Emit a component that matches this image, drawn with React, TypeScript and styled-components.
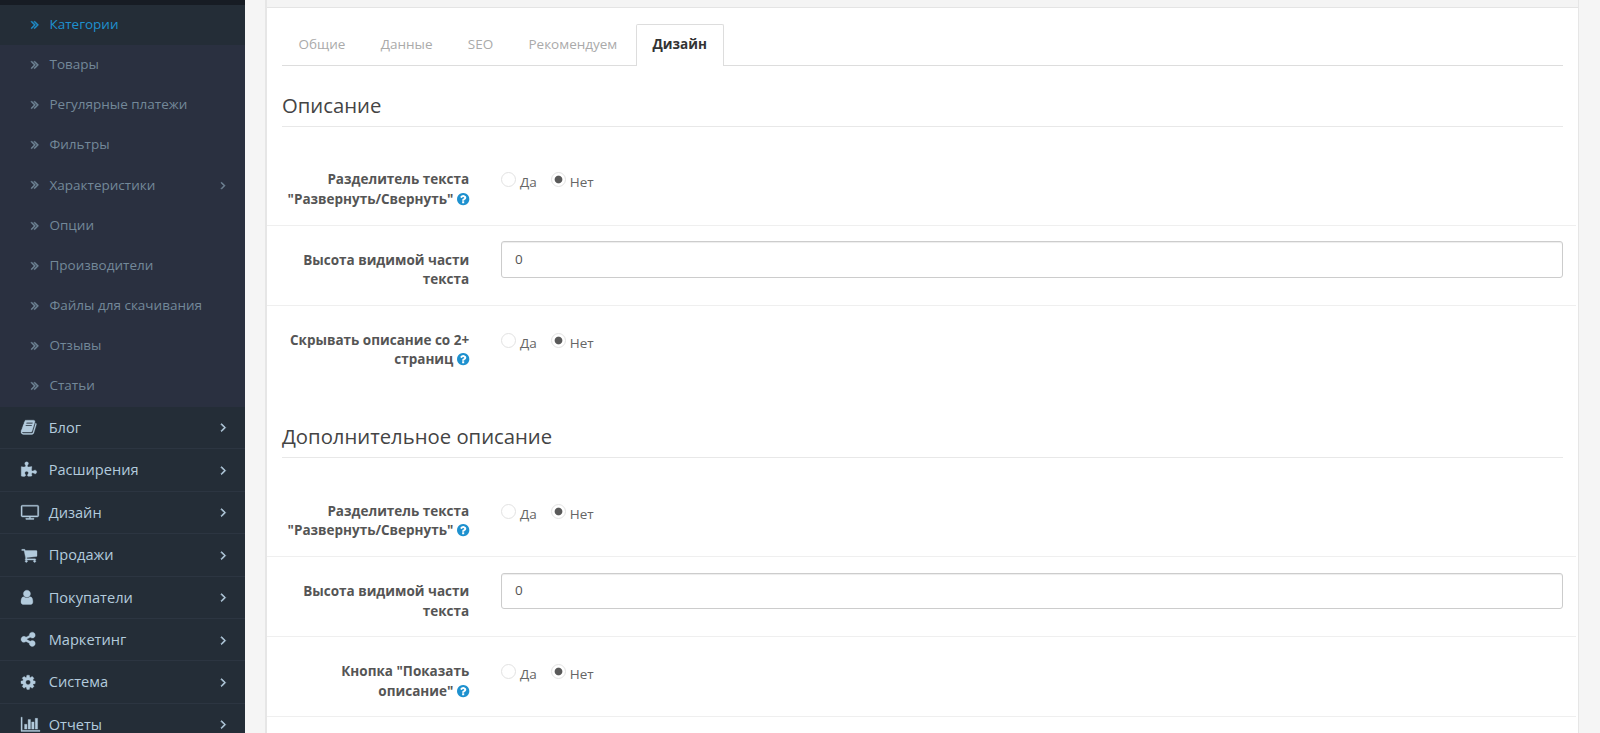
import React, { useState } from "react";
import styled, { createGlobalStyle } from "styled-components";

const GlobalStyle = createGlobalStyle`
  * {
    box-sizing: border-box;
  }

  body {
    margin: 0;
    height: 733px;
    overflow: hidden;
    background: #f5f5f5;
    color: #666;
    font-family: "Open Sans", "Noto Sans", sans-serif;
    font-size: 13.5px;
    line-height: 19.4px;
  }
`;

const Page = styled.div`
  display: flex;
  height: 733px;
  overflow: hidden;
`;

/* ---------- Sidebar ---------- */

const Sidebar = styled.nav`
  flex: 0 0 245px;
  padding-top: 5px;
  background: linear-gradient(#171c24 5px, #242d37 5px);
  overflow: hidden;
`;

const SubMenu = styled.ul`
  margin: 0;
  padding: 0;
  list-style: none;
  background: #2a3040;
`;

const SubItem = styled.li<{ $active?: boolean }>`
  display: flex;
  align-items: center;
  height: 40.2px;
  padding: 0 19.5px 1.2px 31px;
  background: ${(p) => (p.$active ? "#242d37" : "transparent")};
  color: ${(p) => (p.$active ? "#1e91cf" : "#738899")};
  font-size: 13.5px;
  cursor: pointer;

  span {
    flex: 1;
    margin-left: 11px;
    white-space: nowrap;
  }
`;

const TopMenu = styled.ul`
  margin: 0;
  padding: 0;
  list-style: none;
`;

const TopItem = styled.li`
  display: flex;
  align-items: center;
  height: 42.43px;
  padding: 0 19px 0 21px;
  border-bottom: 1px solid #2c3541;
  color: #b3cbdd;
  font-size: 14.6px;
  cursor: pointer;

  span {
    flex: 1;
    white-space: nowrap;
  }
`;

const IconCell = styled.i`
  display: flex;
  flex: 0 0 27.7px;
  align-items: center;
`;

const Glyph = styled.svg<{ $weight?: number }>`
  display: block;
  flex: none;
  overflow: visible;
  fill: currentColor;
  stroke: currentColor;
  stroke-width: ${(p) => p.$weight || 0};
`;

/* ---------- Content ---------- */

const Content = styled.main`
  flex: 1;
  padding: 0 21px 0 20px;
  min-width: 0;
`;

const Panel = styled.section`
  height: 800px;
  border: solid #e6e6e6;
  border-width: 0 1px 0 2px;
  background: #fff;
`;

const PanelHeading = styled.header`
  height: 8px;
  background: #f4f4f4;
  border-bottom: 1px solid #e4e4e4;
`;

const PanelBody = styled.div`
  padding: 16px 15px 0;
`;

const Tabs = styled.ul`
  display: flex;
  height: 42px;
  margin: 0 0 20.6px;
  padding: 0;
  list-style: none;
  border-bottom: 1px solid #ddd;
`;

const Tab = styled.li<{ $active?: boolean }>`
  height: 42px;
  margin-right: 2.1px;
  padding: 9.5px 15.6px 0;
  border: 1px solid ${(p) => (p.$active ? "#ddd" : "transparent")};
  border-bottom: 0;
  border-radius: 2px 2px 0 0;
  background: ${(p) => (p.$active ? "#fff" : "transparent")};
  color: ${(p) => (p.$active ? "#333" : "#aaa")};
  font-weight: ${(p) => (p.$active ? 700 : 400)};
  line-height: 19.4px;
  cursor: pointer;
`;

const Fieldset = styled.section`
  margin-bottom: 32.6px;
`;

const Legend = styled.h2`
  height: 40px;
  margin: 0 0 18.5px;
  padding-top: 4px;
  border-bottom: 1px solid #e8e8e8;
  color: #444;
  font-size: 20.3px;
  font-weight: 400;
  line-height: 28px;
`;

const FormGroup = styled.div`
  display: flex;
  height: 80.05px;
  margin: 0 -13px 0 -15px;
  padding: 15.6px 13px 0 15px;

  & + & {
    border-top: 1px solid #efefef;
    padding-top: 15.2px;
  }
`;

const Label = styled.label`
  flex: 0 0 187.2px;
  padding-top: 9.7px;
  color: #555;
  font-weight: 700;
  text-align: right;

  svg {
    display: inline-block;
    margin: 0 -0.5px 0 4px;
    color: #1e91cf;
    vertical-align: -2.3px;
  }
`;

const Field = styled.div`
  flex: 1;
  margin-left: 31.8px;
`;

const RadioGroup = styled.div`
  display: flex;
  gap: 14px;
  padding-top: 11px;
`;

const RadioLabel = styled.label`
  display: flex;
  gap: 4px;
  cursor: pointer;
`;

const Radio = styled.input`
  appearance: none;
  width: 15px;
  height: 15px;
  margin: 0.8px 0 0;
  border: 1px solid #e2e2e2;
  border-radius: 50%;
  background: #fff;

  &:checked {
    background: radial-gradient(circle, #5a5a5a 3.4px, #fff 4.3px);
  }
`;

const RadioText = styled.span`
  padding-top: 1.8px;
`;

const Input = styled.input`
  display: block;
  width: 100%;
  height: 36.5px;
  padding: 0 13px 1px;
  border: 1px solid #ccc;
  border-radius: 3px;
  box-shadow: inset 0 1px 1px rgba(0, 0, 0, 0.075);
  background: #fff;
  color: #555;
  font: inherit;
  outline: none;
`;

/* Icon outlines, drawn on a grid 1792 units tall: [width, path] */
const icons = {
  angleRight: [
    1280,
    "M1171 960q0 13-10 23l-466 466q-10 10-23 10t-23-10l-50-50q-10-10-10-23t10-23l393-393-393-393q-10-10-10-23t10-23l50-50q10-10 23-10t23 10l466 466q10 10 10 23z",
  ],
  book: [
    1792,
    "M1703 478q40 57 18 129l-275 906q-19 64-76.5 107.5t-122.5 43.5h-923q-77 0-148.5-53.5t-99.5-131.5q-24-67-2-127 0-4 3-27t4-37q1-8-3-21.5t-3-19.5q2-11 8-21t16.5-23.5 16.5-23.5q23-38 45-91.5t30-91.5q3-10 .5-30t-.5-28q3-11 17-28t17-23q21-36 42-92t25-90q1-9-2.5-32t.5-28q4-13 22-30.5t22-22.5q19-26 42.5-84.5t27.5-96.5q1-8-3-25.5t-2-26.5q2-8 9-18t18-23 17-21q8-12 16.5-30.5t15-35 16-36 19.5-32 26.5-23.5 36-11.5 47.5 5.5l-1 3q38-9 51-9h761q74 0 114 56t18 130l-274 906q-36 119-71.5 153.5t-128.5 34.5h-869q-27 0-38 15-11 16-1 43 24 70 144 70h923q29 0 56-15.5t35-41.5l300-987q7-22 5-57 38 15 59 43zm-1064 2q-4 13 2 22.5t20 9.5h608q13 0 25.5-9.5t16.5-22.5l21-64q4-13-2-22.5t-20-9.5h-608q-13 0-25.5 9.5t-16.5 22.5zm-83 256q-4 13 2 22.5t20 9.5h608q13 0 25.5-9.5t16.5-22.5l21-64q4-13-2-22.5t-20-9.5h-608q-13 0-25.5 9.5t-16.5 22.5z",
  ],
  puzzle: [
    1792,
    "M1755 1083q0 81-44.5 135t-123.5 54q-41 0-77.5-17.5t-59-38-56.5-38-71-17.5q-110 0-110 124 0 39 16 115t15 115v5q-22 0-33 1-34 3-97.5 11.5t-115.5 13.5-98 5q-61 0-103-26.5t-42-83.5q0-37 17.5-71t38-56.5 38-59 17.5-77.5q0-79-54-123.5t-135-44.5q-84 0-143 45.5t-59 127.5q0 43 15 83t33.5 64.5 33.5 53 15 50.5q0 45-46 89-37 35-117 35-95 0-245-24-9-2-27.5-4t-27.5-4l-13-2q-1 0-3-1-2 0-2-1v-1024q2 1 17.5 3.5t34 5 21.5 3.5q150 24 245 24 80 0 117-35 46-44 46-89 0-22-15-50.5t-33.5-53-33.5-64.5-15-83q0-82 59-127.5t144-45.5q80 0 134 44.5t54 123.5q0 41-17.5 77.5t-38 59-38 56.5-17.5 71q0 57 42 83.5t103 26.5q64 0 180-15t163-17v2q-1 2-3.5 17.5t-5 34-3.5 21.5q-24 150-24 245 0 80 35 117 44 46 89 46 22 0 50.5-15t53-33.5 64.5-33.5 83-15q82 0 127.5 59t45.5 143z",
  ],
  television: [
    1920,
    "M1792 1248v-960q0-13-9.5-22.5t-22.5-9.5h-1600q-13 0-22.5 9.5t-9.5 22.5v960q0 13 9.5 22.5t22.5 9.5h1600q13 0 22.5-9.5t9.5-22.5zm128-960v960q0 66-47 113t-113 47h-736v128h352q14 0 23 9t9 23v64q0 14-9 23t-23 9h-832q-14 0-23-9t-9-23v-64q0-14 9-23t23-9h352v-128h-736q-66 0-113-47t-47-113v-960q0-66 47-113t113-47h1600q66 0 113 47t47 113z",
  ],
  cart: [
    1792,
    "M704 1536q0 52-38 90t-90 38-90-38-38-90 38-90 90-38 90 38 38 90zm896 0q0 52-38 90t-90 38-90-38-38-90 38-90 90-38 90 38 38 90zm128-1088v512q0 24-16.5 42.5t-40.5 21.5l-1044 122q13 60 13 70 0 16-24 64h920q26 0 45 19t19 45-19 45-45 19h-1024q-26 0-45-19t-19-45q0-11 8-31.5t16-36 21.5-40 15.5-29.5l-177-823h-204q-26 0-45-19t-19-45 19-45 45-19h256q16 0 28.5 6.5t19.5 15.5 13 24.5 8 26 5.5 29.5 4.5 26h1201q26 0 45 19t19 45z",
  ],
  user: [
    1792,
    "M1536 1399q0 109-62.5 187t-150.5 78h-854q-88 0-150.5-78t-62.5-187q0-85 8.5-160.5t31.5-152 58.5-131 94-89 134.5-34.5q131 128 313 128t313-128q76 0 134.5 34.5t94 89 58.5 131 31.5 152 8.5 160.5zm-256-887q0 159-112.5 271.5t-271.5 112.5-271.5-112.5-112.5-271.5 112.5-271.5 271.5-112.5 271.5 112.5 112.5 271.5z",
  ],
  share: [
    1792,
    "M1344 1024q133 0 226.5 93.5t93.5 226.5-93.5 226.5-226.5 93.5-226.5-93.5-93.5-226.5q0-12 2-34l-360-180q-92 86-218 86-133 0-226.5-93.5t-93.5-226.5 93.5-226.5 226.5-93.5q126 0 218 86l360-180q-2-22-2-34 0-133 93.5-226.5t226.5-93.5 226.5 93.5 93.5 226.5-93.5 226.5-226.5 93.5q-126 0-218-86l-360 180q2 22 2 34t-2 34l360 180q92-86 218-86z",
  ],
  cog: [
    1792,
    "M1152 896q0-106-75-181t-181-75-181 75-75 181 75 181 181 75 181-75 75-181zm512-109v222q0 12-8 23t-20 13l-185 28q-19 54-39 91 35 50 107 138 10 12 10 25t-9 23q-27 37-99 108t-94 71q-12 0-26-9l-138-108q-44 23-91 38-16 136-29 186-7 28-36 28h-222q-14 0-24.5-8.5t-11.5-21.5l-28-184q-49-16-90-37l-141 107q-10 9-25 9-14 0-25-11-126-114-165-168-7-10-7-23 0-12 8-23 15-21 51-66.5t54-70.5q-27-50-41-99l-183-27q-13-2-21-12.5t-8-23.5v-222q0-12 8-23t19-13l186-28q14-46 39-92-40-57-107-138-10-12-10-24 0-10 9-23 26-36 98.5-107.5t94.5-71.5q13 0 26 10l138 107q44-23 91-38 16-136 29-186 7-28 36-28h222q14 0 24.5 8.5t11.5 21.5l28 184q49 16 90 37l142-107q9-9 24-9 13 0 25 10 129 119 165 170 7 8 7 22 0 12-8 23-15 21-51 66.5t-54 70.5q26 50 41 98l183 28q13 2 21 12.5t8 23.5z",
  ],
  chart: [
    2048,
    "M640 896v512h-256v-512h256zm384-512v1024h-256v-1024h256zm1024 1152v128h-2048v-1536h128v1408h1920zm-640-896v768h-256v-768h256zm384-384v1152h-256v-1152h256z",
  ],
  question: [
    1792,
    "M1024 1376v-192q0-14-9-23t-23-9h-192q-14 0-23 9t-9 23v192q0 14 9 23t23 9h192q14 0 23-9t9-23zm256-672q0-88-55.5-163t-138.5-116-170-41q-243 0-371 213-15 24 8 42l132 100q7 6 19 6 16 0 25-12 53-68 86-92 34-24 86-24 48 0 85.5 26t37.5 59q0 38-20 61t-68 45q-63 28-115.5 86.5t-52.5 125.5v36q0 14 9 23t23 9h192q14 0 23-9t9-23q0-19 21.5-49.5t54.5-49.5q32-18 49-28.5t46-35 44.5-48 28-60.5 12.5-81zm384 192q0 209-103 385.5t-279.5 279.5-385.5 103-385.5-103-279.5-279.5-103-385.5 103-385.5 279.5-279.5 385.5-103 385.5 103 279.5 279.5 103 385.5z",
  ],
} as const;

type IconName = keyof typeof icons;

/* Left side bearing of each outline, cropped so the icons share one left edge */
const bearings: Partial<Record<IconName, number>> = {
  angleRight: 589,
  book: 64,
  puzzle: 64,
  user: 256,
  share: 128,
  cog: 128,
  question: 128,
};

const Icon = ({ name, size, weight }: { name: IconName; size: number; weight?: number }) => {
  const [right, path] = icons[name];
  const left = bearings[name] || 0;
  const width = name === "angleRight" ? 582 : name === "question" ? 1536 : right - left;

  return (
    <Glyph
      viewBox={`${left} 0 ${width} 1792`}
      width={(size * width) / 1792}
      height={size}
      $weight={weight}
      aria-hidden="true"
    >
      <path d={path} />
    </Glyph>
  );
};

const DoubleAngle = () => (
  <Glyph viewBox="0 64 966 1792" width={7.5} height={13.8} $weight={70} aria-hidden="true">
    <path transform="translate(-589 0)" d={icons.angleRight[1]} />
    <path transform="translate(-205 0)" d={icons.angleRight[1]} />
  </Glyph>
);

const subItems = [
  { label: "Категории" },
  { label: "Товары" },
  { label: "Регулярные платежи" },
  { label: "Фильтры" },
  { label: "Характеристики", nested: true },
  { label: "Опции" },
  { label: "Производители" },
  { label: "Файлы для скачивания" },
  { label: "Отзывы" },
  { label: "Статьи" },
];

const topItems: { icon: IconName; label: string }[] = [
  { icon: "book", label: "Блог" },
  { icon: "puzzle", label: "Расширения" },
  { icon: "television", label: "Дизайн" },
  { icon: "cart", label: "Продажи" },
  { icon: "user", label: "Покупатели" },
  { icon: "share", label: "Маркетинг" },
  { icon: "cog", label: "Система" },
  { icon: "chart", label: "Отчеты" },
];

const tabs = ["Общие", "Данные", "SEO", "Рекомендуем", "Дизайн"];

const YesNo = ({ name }: { name: string }) => {
  const [value, setValue] = useState("0");

  return (
    <RadioGroup>
      <RadioLabel>
        <Radio type="radio" name={name} checked={value === "1"} onChange={() => setValue("1")} />
        <RadioText>Да</RadioText>
      </RadioLabel>
      <RadioLabel>
        <Radio type="radio" name={name} checked={value === "0"} onChange={() => setValue("0")} />
        <RadioText>Нет</RadioText>
      </RadioLabel>
    </RadioGroup>
  );
};

const SwitchRow = ({ name, lines }: { name: string; lines: [string, string] }) => (
  <FormGroup>
    <Label>
      {lines[0]}
      <br />
      {lines[1]}
      <Icon name="question" size={14.4} />
    </Label>
    <Field>
      <YesNo name={name} />
    </Field>
  </FormGroup>
);

const HeightRow = ({ name }: { name: string }) => (
  <FormGroup>
    <Label htmlFor={name}>Высота видимой части текста</Label>
    <Field>
      <Input id={name} name={name} defaultValue="0" />
    </Field>
  </FormGroup>
);

const App = () => {
  const [activeTab, setActiveTab] = useState("Дизайн");

  return (
    <>
      <GlobalStyle />
      <Page>
        <Sidebar>
          <SubMenu>
            {subItems.map((item, index) => (
              <SubItem key={item.label} $active={index === 0}>
                <DoubleAngle />
                <span>{item.label}</span>
                {item.nested && <Icon name="angleRight" size={12.5} weight={80} />}
              </SubItem>
            ))}
          </SubMenu>
          <TopMenu>
            {topItems.map((item) => (
              <TopItem key={item.label}>
                <IconCell>
                  <Icon name={item.icon} size={16.6} weight={36} />
                </IconCell>
                <span>{item.label}</span>
                <Icon name="angleRight" size={14.2} weight={90} />
              </TopItem>
            ))}
          </TopMenu>
        </Sidebar>

        <Content>
          <Panel>
            <PanelHeading />
            <PanelBody>
              <Tabs>
                {tabs.map((tab) => (
                  <Tab key={tab} $active={tab === activeTab} onClick={() => setActiveTab(tab)}>
                    {tab}
                  </Tab>
                ))}
              </Tabs>

              <Fieldset>
                <Legend>Описание</Legend>
                <SwitchRow name="divider" lines={["Разделитель текста", '"Развернуть/Свернуть"']} />
                <HeightRow name="height" />
                <SwitchRow name="hide" lines={["Скрывать описание со 2+", "страниц"]} />
              </Fieldset>

              <Fieldset>
                <Legend>Дополнительное описание</Legend>
                <SwitchRow name="divider-extra" lines={["Разделитель текста", '"Развернуть/Свернуть"']} />
                <HeightRow name="height-extra" />
                <SwitchRow name="button-extra" lines={['Кнопка "Показать', 'описание"']} />
                <FormGroup />
              </Fieldset>
            </PanelBody>
          </Panel>
        </Content>
      </Page>
    </>
  );
};

export default App;
